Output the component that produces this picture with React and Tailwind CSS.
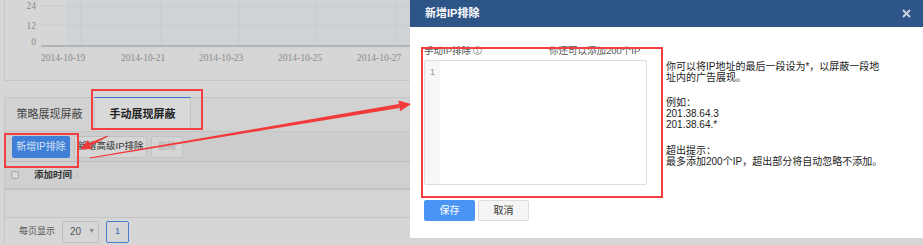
import React from "react";

const font = { fontFamily: '"Liberation Sans", "Noto Sans CJK SC", sans-serif' };

const ChartArea = () => {
  const grids = [80, 160, 238, 316, 396];
  const labels = [
    { x: 40, t: "2014-10-19" },
    { x: 120, t: "2014-10-21" },
    { x: 198, t: "2014-10-23" },
    { x: 277, t: "2014-10-25" },
    { x: 356, t: "2014-10-27" },
  ];
  return (
    <svg width="406" height="80" className="block">
      <rect x="36" y="0" width="25" height="46" fill="#d6d6d6" />
      <rect x="61" y="0" width="345" height="46" fill="#ced3d7" />
      {grids.map((g) => (
        <line key={g} x1={g - 4} y1="0" x2={g - 4} y2="46" stroke="#c7ccd1" strokeWidth="1" />
      ))}
      <line x1="36" y1="6" x2="406" y2="6" stroke="#c7ccd1" />
      <line x1="36" y1="25" x2="406" y2="25" stroke="#c7ccd1" />
      <line x1="36" y1="46" x2="406" y2="46" stroke="#a9a9a9" strokeWidth="1.5" />
      <g fontFamily='"Liberation Serif", serif' fontSize="9.5" fill="#8a8a8a">
        <text x="31" y="9" textAnchor="end">24</text>
        <text x="31" y="29" textAnchor="end">12</text>
        <text x="31" y="45" textAnchor="end">0</text>
        {labels.map((l) => (
          <text key={l.t} x={l.x - 4} y="61">{l.t}</text>
        ))}
      </g>
    </svg>
  );
};

const Arrows = () => (
  <svg width="923" height="245" className="absolute left-0 top-0 pointer-events-none">
    <polygon points="90.1,158.5 89.9,157.5 398.9,104 399.5,108" fill="#f23a3a" />
    <polygon points="411,104 398.4,100.6 400,111.2" fill="#f23a3a" />
    <polygon points="108.2,136.5 107.8,135.5 89.4,143 90.6,145.8" fill="#f23a3a" />
    <polygon points="80,149.5 87.9,139.9 92.1,148.9" fill="#f23a3a" />
  </svg>
);

const Modal = () => (
  <div className="absolute right-0 top-0 w-[513px] h-[238px] bg-white flex flex-col whitespace-nowrap">
    <div className="h-[27px] bg-[#2e5588] flex items-center justify-between pl-[15px] pr-[12px]">
      <span className="text-[11px] font-bold text-white">新增IP排除</span>
      <svg width="9" height="9" viewBox="0 0 9 9">
        <path d="M1 1 L8 8 M8 1 L1 8" stroke="#c9d2df" strokeWidth="2" />
      </svg>
    </div>
    <div className="flex pl-[14px] pt-[16px]">
      <div className="relative w-[223px]">
        <div className="flex text-[9.5px] text-[#555] h-[15px] leading-[15px]">
          <span className="w-[125px] flex items-center gap-[2px]">
            手动IP排除
            <span className="inline-flex items-center justify-center w-[9px] h-[9px] rounded-full border border-[#999] text-[6px] leading-none text-[#888]">1</span>
          </span>
          <span>你还可以添加200个IP</span>
        </div>
        <div className="mt-[2px] h-[125px] border border-[#ddd] rounded-[2px] flex">
          <div className="w-[15px] bg-[#f7f7f7] text-[9px] text-[#999] text-center pt-[5px]">1</div>
          <div className="flex-1" />
        </div>
        <div className="absolute left-[-3px] top-[4px] w-[242px] h-[151px] border-2 border-[#f23f3f]" />
        <div className="flex gap-[3px] mt-[15px]">
          <button className="w-[51px] h-[21px] bg-[#4a94f5] text-white text-[10px] rounded-[2px]">保存</button>
          <button className="w-[51px] h-[21px] bg-[#f5f5f5] border border-[#ddd] text-[#333] text-[10px] rounded-[2px]">取消</button>
        </div>
      </div>
      <div className="ml-[19px] pt-[18px] text-[10px] leading-[11px] text-[#222]">
        <p>你可以将IP地址的最后一段设为*，以屏蔽一段地</p>
        <p>址内的广告展现。</p>
        <p className="mt-[14px]">例如：</p>
        <p>201.38.64.3</p>
        <p>201.38.64.*</p>
        <p className="mt-[15px]">超出提示：</p>
        <p>最多添加200个IP，超出部分将自动忽略不添加。</p>
      </div>
    </div>
  </div>
);

export default function App() {
  return (
    <div className="relative w-[923px] h-[245px] overflow-hidden bg-[#d6d6d6] whitespace-nowrap" style={font}>
      <div className="pl-[4px]">
        <div className="h-[81px] border-l border-b border-[#c6c6c6]">
          <ChartArea />
        </div>
        <div className="h-[16px]" />
        <div className="border-l border-[#c6c6c6]">
          <div className="h-[35px] bg-[#d2d2d2] border-t border-b border-[#c4c4c4] flex items-end">
            <div className="w-[89px] h-[34px] flex items-center justify-center text-[11px] text-[#444]">策略展现屏蔽</div>
            <div className="w-[97px] h-[34px] bg-[#d9d9d9] border-t border-[#3a74c9] border-x border-x-[#c4c4c4] flex items-center justify-center text-[11px] font-bold text-[#222]">
              手动展现屏蔽
            </div>
          </div>
          <div className="h-[30px] bg-[#cdcdcd] border-b border-[#bdbdbd] flex items-center pl-[7px] gap-[4px]">
            <button className="w-[58px] h-[22px] bg-[#3f7fd8] text-[#d6e3f6] text-[10px] rounded-[2px]">新增IP排除</button>
            <button className="w-[73px] h-[22px] bg-[#d6d6d6] border border-[#c0c0c0] text-[#333] text-[9.5px] rounded-[2px]">新增高级IP排除</button>
            <button className="w-[32px] h-[22px] bg-[#d4d4d4] border border-[#c2c2c2] text-[#acacac] text-[9px] rounded-[2px]">删除</button>
          </div>
          <div className="h-[28px] bg-[#d0d0d0] border-b-2 border-[#c2c2c2] flex items-center pl-[6px]">
            <span className="w-[8px] h-[8px] border border-[#aaa] rounded-[2px] bg-[#d8d8d8]" />
            <span className="ml-[15px] text-[9.5px] font-bold text-[#333]">添加时间</span>
            <span className="ml-[3px] text-[9px] text-[#aaa]">↓</span>
          </div>
          <div className="h-[28px] bg-[#d4d4d4] border-b border-[#c4c4c4]" />
          <div className="h-[27px] flex items-center pl-[14px]">
            <span className="text-[9px] text-[#555]">每页显示</span>
            <div className="ml-[7px] w-[37px] h-[22px] border border-[#bdbdbd] rounded-[2px] flex items-center pl-[7px] gap-[7px] text-[10px] text-[#555]">
              20 <span className="text-[7px] text-[#888]">▼</span>
            </div>
            <div className="ml-[7px] w-[23px] h-[22px] border border-[#4a7fd0] rounded-[2px] flex items-center justify-center text-[9px] text-[#2f63b8]">1</div>
          </div>
        </div>
      </div>
      <div className="absolute left-[91px] top-[89px] w-[112px] h-[41px] border-2 border-[#f23f3f]" />
      <div className="absolute left-[4px] top-[133px] w-[75px] h-[35px] border-2 border-[#f23f3f]" />
      <Modal />
      <Arrows />
    </div>
  );
}
